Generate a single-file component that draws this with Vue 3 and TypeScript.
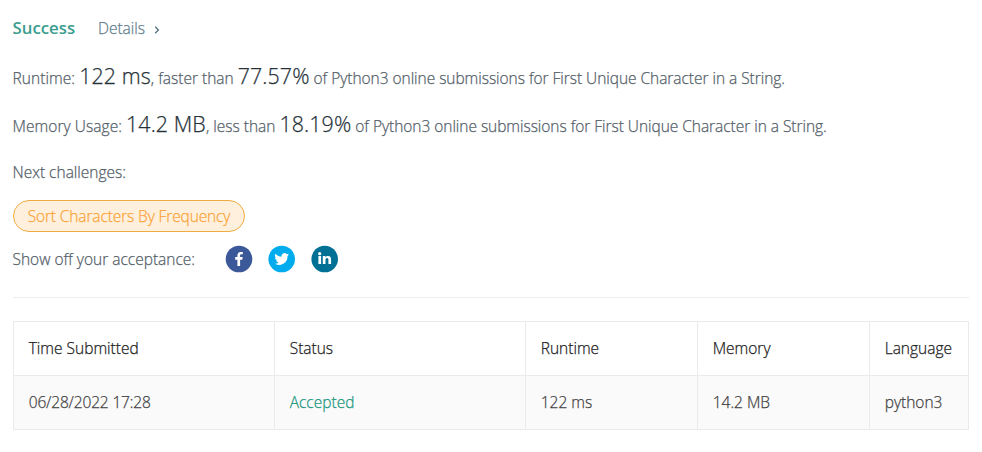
<script setup lang="ts">
interface Stat {
  label: string
  value: string
  comparison: string
  percent: string
}

interface Submission {
  time: string
  status: string
  runtime: string
  memory: string
  language: string
}

const problem = 'First Unique Character in a String'
const language = 'Python3'

const stats: Stat[] = [
  { label: 'Runtime:', value: '122 ms', comparison: ', faster than', percent: '77.57%' },
  { label: 'Memory Usage:', value: '14.2 MB', comparison: ', less than', percent: '18.19%' },
]

const challenges: string[] = ['Sort Characters By Frequency']

const columns: string[] = ['Time Submitted', 'Status', 'Runtime', 'Memory', 'Language']

const submissions: Submission[] = [
  { time: '06/28/2022 17:28', status: 'Accepted', runtime: '122 ms', memory: '14.2 MB', language: 'python3' },
]
</script>

<template>
  <main class="result">
    <header class="heading">
      <span class="success">Success</span>
      <a class="details">
        Details
        <svg class="chevron" viewBox="0 0 6 8" aria-hidden="true"><path d="M1.2 0.8 4.4 4 1.2 7.2" /></svg>
      </a>
    </header>

    <p v-for="stat in stats" :key="stat.label" class="stat">
      <span class="label">{{ stat.label }}</span> <span class="figure">{{ stat.value }}</span>{{ stat.comparison }}
      <span class="figure">{{ stat.percent }}</span>
      <span class="tail"> of {{ language }} online submissions for {{ problem }}.</span>
    </p>

    <p class="next">Next challenges:</p>
    <div class="challenges">
      <a v-for="challenge in challenges" :key="challenge" class="challenge">{{ challenge }}</a>
    </div>

    <div class="share">
      <span>Show off your acceptance:</span>
      <div class="networks">
        <svg viewBox="0 0 28 28" role="img">
          <circle cx="14" cy="14" r="13.3" fill="#3b5998" />
          <path fill="#fff" d="M15.1 21v-6.3h2.2l.4-2.6h-2.600v-1.500c0-.8.3-1.300 1.400-1.300h1.300V7.100c-.3 0-1-.1-1.900-.1-2.100 0-3.500 1.200-3.500 3.400v1.700h-2.200v2.600h2.200V21z" />
        </svg>
        <svg viewBox="0 0 28 28" role="img">
          <circle cx="13.7" cy="14" r="13.3" fill="#00aced" />
          <path fill="#fff" d="M21 9.6c-.5.2-1.100.4-1.700.5.6-.4 1.100-1 1.300-1.700-.6.4-1.200.6-1.900.7a3 3 0 0 0-5.100 2.700c-2.500-.1-4.700-1.300-6.200-3.100a3 3 0 0 0 .9 4c-.5 0-1-.2-1.400-.4 0 1.500 1 2.700 2.400 3-.4.1-.9.1-1.300 0 .4 1.200 1.500 2 2.800 2.100A6 6 0 0 1 6.400 18.600a8.500 8.500 0 0 0 13.100-7.500c.6-.4 1.100-.9 1.500-1.500z" />
        </svg>
        <svg viewBox="0 0 28 28" role="img">
          <circle cx="13.700" cy="14" r="13.3" fill="#007095" />
          <circle cx="8.700" cy="8.700" r="1.600" fill="#fff" />
          <path fill="#fff" d="M7.400 11.100h2.700v7.900H7.400zM11.800 11.100h2.600v1.100c.4-.7 1.300-1.300 2.500-1.300 2.600 0 3.200 1.700 3.200 3.900v4.200h-2.700v-3.800c0-1 0-2.100-1.300-2.100s-1.600 1-1.600 2v3.900h-2.700z" />
        </svg>
      </div>
    </div>

    <hr class="divider" />

    <table class="submissions">
      <colgroup>
        <col class="col-time" />
        <col class="col-status" />
        <col class="col-runtime" />
        <col class="col-memory" />
        <col class="col-language" />
      </colgroup>
      <thead>
        <tr>
          <th v-for="column in columns" :key="column">{{ column }}</th>
        </tr>
      </thead>
      <tbody>
        <tr v-for="row in submissions" :key="row.time">
          <td class="time">{{ row.time }}</td>
          <td class="accepted">{{ row.status }}</td>
          <td>{{ row.runtime }}</td>
          <td>{{ row.memory }}</td>
          <td>{{ row.language }}</td>
        </tr>
      </tbody>
    </table>
  </main>
</template>

<style>
body {
  background: #fff;
}
</style>

<style scoped>
.result {
  box-sizing: border-box;
  width: 982px;
  height: 452px;
  padding: 16px 13px 0 12.5px;
  color: #546069;
  font-family: "Open Sans", "Noto Sans", sans-serif;
  font-size: 15.5px;
  font-weight: 300;
  line-height: 24px;
  white-space: nowrap;
  -webkit-text-stroke: 0.25px currentColor;
}

.heading {
  display: flex;
  gap: 23px;
  height: 24px;
}

.success {
  color: #3a9d8f;
  font-size: 16.8px;
  font-weight: 600;
  -webkit-text-stroke: 0;
}

.details {
  display: flex;
  align-items: center;
  gap: 9px;
  color: #607d8b;
  letter-spacing: -0.05px;
  line-height: 25px;
}

.chevron {
  width: 6px;
  height: 8px;
  margin-top: 3px;
  fill: none;
  stroke: #54717e;
  stroke-width: 1.3;
}

.stat {
  height: 24px;
  margin: 24px 0 0;
}

.label {
  letter-spacing: 0.06px;
}

.figure {
  color: #263238;
  font-size: 21.4px;
  letter-spacing: 0.1px;
}

.tail {
  letter-spacing: -0.04px;
}

.next {
  margin: 24px 0 0;
}

.challenges {
  display: flex;
  margin-top: 16px;
}

.challenge {
  box-sizing: border-box;
  width: 232px;
  height: 32px;
  margin-left: 0.5px;
  border: 1px solid #efac42;
  border-radius: 16px;
  background: #fff0dd;
  color: #faa43a;
  line-height: 31px;
  letter-spacing: -0.12px;
  text-align: center;
}

.share {
  display: flex;
  align-items: center;
  height: 28px;
  margin-top: 13px;
}

.share > span {
  padding-bottom: 1px;
}

.networks {
  display: flex;
  gap: 15px;
  margin-left: 30px;
}

.networks svg {
  width: 28px;
  height: 28px;
}

.divider {
  height: 1px;
  margin: 24px 0 23px 0.5px;
  border: 0;
  background: #eee;
}

.submissions {
  width: 956px;
  margin-left: 0.5px;
  table-layout: fixed;
  border: solid #ebebeb;
  border-width: 1px 0 0 1px;
  border-spacing: 0;
}

.col-time {
  width: 261px;
}

.col-status {
  width: 251px;
}

.col-runtime,
.col-memory {
  width: 172px;
}

.col-language {
  width: 99px;
}

th,
td {
  box-sizing: border-box;
  height: 54px;
  padding: 0 0 1px 14.7px;
  border: solid #ebebeb;
  border-width: 0 1px 1px 0;
  text-align: left;
  vertical-align: middle;
}

th {
  color: #212121;
  font-weight: 300;
}

td {
  background: #fafafa;
  color: #424242;
}

td.time {
  letter-spacing: -0.15px;
}

td.accepted {
  color: #1b9680;
}
</style>
